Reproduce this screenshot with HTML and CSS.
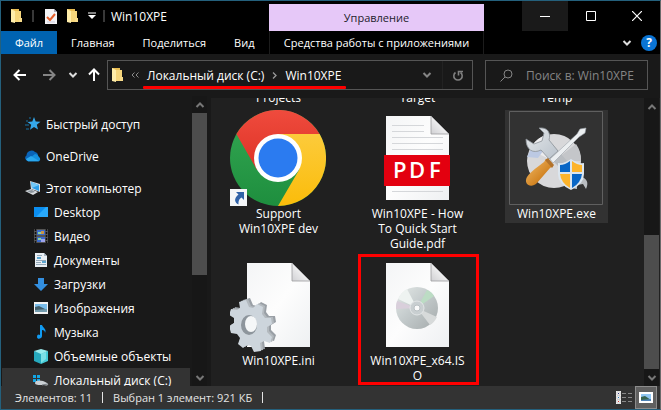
FILE: index.html
```html
<!DOCTYPE html>
<html lang="ru">
<head>
<meta charset="utf-8">
<title>Win10XPE</title>
<link rel="stylesheet" href="styles.css">
</head>
<body>
<svg width="0" height="0" class="defs" aria-hidden="true">
  <defs>
    <linearGradient id="paper" x1="0" y1="0" x2="1" y2="1"><stop offset="0" stop-color="#f4f5f6"/><stop offset=".5" stop-color="#fdfdfd"/><stop offset="1" stop-color="#eef0f2"/></linearGradient>
    <linearGradient id="fold" x1="0" y1="1" x2="1" y2="0"><stop offset="0" stop-color="#d0d0d3"/><stop offset=".5" stop-color="#eeeeef"/></linearGradient>
    <linearGradient id="steel" x1="0" y1="0" x2="1" y2="1"><stop offset="0" stop-color="#e6e9eb"/><stop offset="1" stop-color="#b9c2cb"/></linearGradient>
    <linearGradient id="wood" x1="0" y1="0" x2="1" y2="1"><stop offset="0" stop-color="#f3bd6c"/><stop offset=".6" stop-color="#d48726"/><stop offset="1" stop-color="#97550f"/></linearGradient>
    <linearGradient id="disc" x1="0" y1="0" x2="1" y2="1"><stop offset="0" stop-color="#e4e9e7"/><stop offset=".45" stop-color="#c5cccd"/><stop offset="1" stop-color="#a4aaab"/></linearGradient>
    <linearGradient id="red" x1="0" y1="0" x2="0" y2="1"><stop offset="0" stop-color="#ef4b3d"/><stop offset="1" stop-color="#de3226"/></linearGradient>
    <linearGradient id="yellow" x1="0" y1="0" x2="0" y2="1"><stop offset="0" stop-color="#fccb3b"/><stop offset="1" stop-color="#fbbc0a"/></linearGradient>
    <linearGradient id="green" x1="0" y1="0" x2="0" y2="1"><stop offset="0" stop-color="#34a853"/><stop offset="1" stop-color="#1e8e3e"/></linearGradient>
    <symbol id="folder" viewBox="0 0 11 14"><path d="M0 0h8v2h2v11H0z" fill="#e9bd52"/><path d="M4 2h6v11H4z" fill="#f6d67c"/><path d="M0 0l4 2v12l-4-1z" fill="#ffedaa"/><path d="M8 9h3v4H8z" fill="#f8dc8b"/></symbol>
    <symbol id="page" viewBox="0 0 63 84"><path d="M0 0h45l18 18v66H0z" fill="url(#paper)"/><path d="M45 0l18 18H45z" fill="url(#fold)" stroke="#9c9c9e" stroke-width=".8"/></symbol>
    <symbol id="chev" viewBox="0 0 10 8"><path d="M1.500 2L5 5.500 8.500 2" fill="none" stroke="currentColor" stroke-width="2"/></symbol>
  </defs>
</svg>
<div class="window">
  <header class="caption">
    <div class="title-tools">
      <svg class="mini" width="11" height="14"><use href="#folder"/></svg>
      <span class="rule"></span>
      <button class="bare check" aria-label="Свойства"><svg width="12" height="15" viewBox="0 0 12 15"><path d="M0 0h9l3 3v12H0z" fill="#f4f4f6"/><path d="M9 0v3h3z" fill="#aab"/><path d="M2 8l3 3 5-6" fill="none" stroke="#e5602c" stroke-width="2"/><path d="M2 13h8" stroke="#ccd"/></svg></button>
      <button class="bare new" aria-label="Новая папка"><svg width="11" height="14"><use href="#folder"/></svg></button>
      <button class="bare more" aria-label="Настройка панели"><svg width="8" height="8" viewBox="0 0 8 8"><path d="M0 1h8" stroke="#fff" stroke-width="1"/><path d="M0 3h8L4 7z" fill="#fff"/></svg></button>
      <span class="rule"></span>
      <h1>Win10XPE</h1>
    </div>
    <div class="manage">Управление</div>
    <div class="window-buttons">
      <button class="bare hot" aria-label="Свернуть"><svg width="10" height="10"><path d="M0 5.500h10" stroke="#fff"/></svg></button>
      <button class="bare" aria-label="Развернуть"><svg width="10" height="10"><path d="M.5.5h9v9h-9z" fill="none" stroke="#fff"/></svg></button>
      <button class="bare" aria-label="Закрыть"><svg width="10" height="10"><path d="M0 0l10 10M10 0L0 10" stroke="#fff" stroke-width="1.200"/></svg></button>
    </div>
  </header>
  <nav class="ribbon">
    <div class="tabs">
      <button class="bare file">Файл</button>
      <button class="bare">Главная</button>
      <button class="bare">Поделиться</button>
      <button class="bare">Вид</button>
    </div>
    <button class="bare tools">Средства работы с приложениями</button>
    <div class="help">
      <button class="bare" aria-label="Развернуть ленту"><svg class="light" width="10" height="8"><use href="#chev"/></svg></button>
      <button class="bare question" aria-label="Справка">?</button>
    </div>
  </nav>
  <div class="address-bar">
    <div class="arrows">
      <button class="bare" aria-label="Назад"><svg width="14" height="12" viewBox="0 0 14 12"><path d="M6.500 1L1.500 6l5 5M1.500 6H13" fill="none" stroke="#fff" stroke-width="2"/></svg></button>
      <button class="bare" aria-label="Вперёд"><svg width="14" height="12" viewBox="0 0 14 12"><path d="M7.500 1l5 5-5 5M12.500 6H1" fill="none" stroke="#858585" stroke-width="2"/></svg></button>
      <button class="bare recent" aria-label="Последние"><svg class="light" width="10" height="8"><use href="#chev"/></svg></button>
      <button class="bare up" aria-label="Вверх"><svg width="12" height="14" viewBox="0 0 12 14"><path d="M1 6.500l5-5 5 5M6 1.500V13" fill="none" stroke="#fff" stroke-width="2"/></svg></button>
    </div>
    <div class="address">
      <svg width="11" height="14"><use href="#folder"/></svg>
      <svg class="skip" width="8" height="6" viewBox="0 0 8 6"><path d="M3.500.5L1 3l2.500 2.500M7.500.5L5 3l2.500 2.500" fill="none" stroke="#8a8a8a"/></svg>
      <div class="crumbs">
        <a href="#c">Локальный диск (C:)</a>
        <svg width="5" height="7" viewBox="0 0 5 7"><path d="M1 .5l3 3-3 3" fill="none" stroke="#999" stroke-width="1.300"/></svg>
        <a href="#xpe">Win10XPE</a>
      </div>
      <button class="bare drop" aria-label="Предыдущие"><svg class="grey" width="10" height="8"><use href="#chev"/></svg></button>
      <button class="bare refresh" aria-label="Обновить"><svg width="12" height="13" viewBox="0 0 12 13"><path d="M3.500 3.500a4.200 4.200 0 1 0 5 0M6.500 6.500V2.500H11" fill="none" stroke="#808080" stroke-width="1.600"/></svg></button>
    </div>
    <label class="search">
      <svg width="13" height="13" viewBox="0 0 13 13"><circle cx="8" cy="5" r="4" fill="none" stroke="#858585"/><path d="M5 8l-4.500 4.500" stroke="#858585"/></svg>
      <input type="text" placeholder="Поиск в: Win10XPE" aria-label="Поиск">
    </label>
  </div>
  <main class="main">
    <aside class="sidebar">
      <ul class="tree">
        <li class="root"><svg width="16" height="16" viewBox="0 0 16 16"><path d="M9 1l1.700 4.500 4.800.3-3.700 3 1.200 4.700L9 11l-4 2.700 1.200-4.900L2.500 6l4.800-.4z" fill="#35a8ea"/><path d="M1 5h2M0 9h4M1 13h3M4 2h2" stroke="#1774aa"/></svg>Быстрый доступ</li>
        <li class="root"><svg width="16" height="16" viewBox="0 0 16 16"><path d="M3 13a3 3 0 0 1-1.500-5.500A5 5 0 0 1 10 4a4 4 0 0 1 3 4z" fill="#0a64b8"/><path d="M2 12L10 6a4.600 4.600 0 0 1 4 3 2.500 2.500 0 0 1-.5 4.500H3z" fill="#1590df"/><path d="M1 11l5-3 8 5H3a3 3 0 0 1-2-2z" fill="#2aa8ee"/></svg>OneDrive</li>
        <li class="root"><svg width="16" height="16" viewBox="0 0 16 16"><path d="M5 1l10 3v8L6 9z" fill="#d6dce2"/><path d="M6 2l8 3v6L7 8z" fill="#2d9ee8"/><path d="M6 2l8 3-7 3z" fill="#72c7f7"/><path d="M0 11l6-2 7 3-5 3z" fill="#d9dde0"/><path d="M2 11l5-1 3 2-4 1z" fill="#8b949c"/></svg>Этот компьютер</li>
        <li><svg width="16" height="16" viewBox="0 0 16 16"><path d="M1 3h14v10H1z" fill="#0b8ef0"/><path d="M3 13L13 3h2v10z" fill="#29a9fb"/></svg>Desktop</li>
        <li><svg width="16" height="16" viewBox="0 0 16 16"><path d="M1 1h14v14H1z" fill="#555"/><path d="M2.500 1v14M13.500 1v14" stroke="#111" stroke-width="1.500" stroke-dasharray="2 1"/><path d="M4 2h8v5H4zM4 9h8v5H4z" fill="#3a69c9"/><path d="M5 4h4v2H5zM5 10h3v2H5z" fill="#8cd19a"/><path d="M8 3h3v3H8z" fill="#c99547"/><path d="M8 11h4v3H8z" fill="#9da3ec"/></svg>Видео</li>
        <li><svg width="16" height="16" viewBox="0 0 16 16"><path d="M2 1h9l3 3v11H2z" fill="#e9eff4"/><path d="M11 1v3h3z" fill="#a6b5c2"/><path d="M4 3.500h5M3 8.500h10M3 10.500h5M3 12.500h10" stroke="#93a7b7"/><path d="M4 5h4v2H4zM9 9h4v2H9z" fill="#5ba5d0"/></svg>Документы</li>
        <li><svg width="16" height="16" viewBox="0 0 16 16"><path d="M5 2h6v6h4l-7 7-7-7h4z" fill="#338fe0"/></svg>Загрузки</li>
        <li><svg width="16" height="16" viewBox="0 0 16 16"><path d="M1 2h14v12H1z" fill="#f2f2f2"/><path d="M2 4h12v8H2z" fill="#79bcea"/><path d="M2 7l4-1 8 4v2H2z" fill="#425d69"/><path d="M2 10l12-1v3H2z" fill="#739cae"/></svg>Изображения</li>
        <li><svg width="16" height="16" viewBox="0 0 16 16"><path d="M7 1h2c1 3 5 4 3 8 0-2-1-3-3-3v6c0 3-5 4-5 1s2-3 3-2z" fill="#109bf2"/></svg>Музыка</li>
        <li><svg width="16" height="16" viewBox="0 0 16 16"><path d="M1 3l7 2v11l-7-3z" fill="#26a9bd"/><path d="M15 3L8 5v11l7-3z" fill="#44cad7"/><path d="M1 3l7-2 7 2-7 3z" fill="#9aebed"/><path d="M8 6l5-2v7l-5 4z" fill="#7bdfe5"/></svg>Объемные объекты</li>
        <li class="current"><svg width="16" height="16" viewBox="0 0 16 16"><path d="M0 3h3v3H0zM4 3h3v3H4zM0 7h3v3H0zM4 7h3v3H4z" fill="#13a7e6"/><path d="M2 11c0-3 5-3 8-2s6 3 5 4-5 0-7 0-6 0-6-2z" fill="#cbd0d4"/><path d="M9 13l6-1" stroke="#747a80"/></svg>Локальный диск (C:)</li>
      </ul>
      <div class="scroll side-scroll"><button class="bare flip" aria-label="Вверх"><svg width="10" height="8"><use href="#chev"/></svg></button><div class="thumb"></div><button class="bare" aria-label="Вниз"><svg width="10" height="8"><use href="#chev"/></svg></button></div>
    </aside>
    <section class="content">
      <div class="files">
        <div class="tail">Projects</div><div class="tail">Target</div><div class="tail">Temp</div>
        <div class="item">
          <svg width="96" height="96" viewBox="0 0 96 96"><circle cx="48" cy="48" r="48" fill="url(#green)"/><path d="M6.400 24A48 48 0 0 1 89.600 24H48v24L27 60z" fill="url(#red)"/><path d="M89.600 24A48 48 0 0 1 48 96L69 60 48 24z" fill="url(#yellow)"/><circle cx="48" cy="48" r="24" fill="#fff"/><circle cx="48" cy="48" r="19.500" fill="#2b7bf0"/><path d="M0 79h17v17H0z" fill="#f4f6f8"/><path d="M6 82h8v8l-2.500-2.500c-3 2-3 4-3 7-4-2-5-6 0-10z" fill="#3062a8"/></svg>
          <span>Support Win10XPE dev</span>
        </div>
        <div class="item">
          <svg width="96" height="96" viewBox="0 0 96 96"><use href="#page" x="17" y="6" width="63" height="84"/><path d="M23 15.500h32M23 21.500h32M23 27.500h51M23 33.500h51M23 39.500h51M23 81.500h51" stroke="#d5d7da"/><path d="M15 45h66v31H15z" fill="#e3000f"/><text class="pdf" x="24" y="68">P</text><text class="pdf" x="40" y="68">D</text><text class="pdf" x="60" y="68">F</text></svg>
          <span>Win10XPE - How To Quick Start Guide.pdf</span>
        </div>
        <div class="item selected">
          <svg width="96" height="96" viewBox="0 0 96 96"><path d="M1.500 1.500h93v93h-93z" fill="none" stroke="#606060"/><circle cx="46" cy="51" r="27" fill="#d8d8da"/><path d="M46 51L22 40a27 27 0 0 1 13-14z" fill="#ececee"/><path d="M19 47l4-8 15-2-8 11z" fill="#bcc9e3"/><path d="M46 51l22-17a27 27 0 0 1 5 17z" fill="#c4c6c9"/><path d="M46 36l27 31c6 1 8 6 5 12l-3-5-6 1v4c-6 0-7-6-5-9L38 44z" fill="#b9bdc1"/><path d="M31 18c9-1 12 5 10 12l9 11-9 8-8-9c-8 4-15 0-15-11l8 5 8-3 2-8z" fill="url(#steel)" stroke="#8c9298" stroke-width=".8"/><path d="M42 49L69 24l3-5 6-1-1 5-6 4-26 26z" fill="#eceff1" stroke="#9ca3a9" stroke-width=".6"/><path d="M38 49l7 7-3 2-13 15c-6 6-14 1-10-6 4-6 12-11 17-15z" fill="url(#wood)"/><path d="M40 48l6 7-2 3-7-8z" fill="#b2722a"/><path d="M63 49q7 5 13 4v11q0 10-13 16Q50 74 50 64V53q6 1 13-4z" fill="#dce6ef"/><path d="M62 51q-5 4-10 4v7h10z" fill="#0866c6"/><path d="M64 51q5 4 10 4v7H64z" fill="#fdb42b"/><path d="M52 64h10v14q-9-5-10-14z" fill="#fdb42b"/><path d="M64 64h10q-1 9-10 14z" fill="#0866c6"/></svg>
          <span>Win10XPE.exe</span>
        </div>
        <div class="item">
          <svg width="96" height="96" viewBox="0 0 96 96"><defs><path id="cog" d="M10 45L17 43 20 50 24 51 28 47 34 50 33 57 36 61 42 61 43 67 38 70 38 75 43 80 41 86 35 84 31 86 32 94 25 95 22 89 18 88 14 91 9 87 11 81 8 77 2 76 0 69 5 66 5 61 0 58 2 52 8 53 11 51z"/></defs><use href="#page" x="17" y="6" width="63" height="84"/><use href="#cog" x="3" y="-2" fill="#999fa5"/><use href="#cog" x="1" y="-1" fill="#b3b9be"/><use href="#cog" x="-1" fill="#cdd5dc"/><ellipse cx="19" cy="68" rx="8" ry="10" fill="#8d959c"/><ellipse cx="21" cy="67" rx="6" ry="8" fill="#f5f7f8"/></svg>
          <span>Win10XPE.ini</span>
        </div>
        <div class="item marked">
          <svg width="96" height="96" viewBox="0 0 96 96"><use href="#page" x="17" y="6" width="63" height="84"/><circle cx="48" cy="51" r="21" fill="url(#disc)"/><path d="M48 51L29 42q3-7 9-10z" fill="#eef3f1"/><path d="M48 51l-21 1q0-5 1-8z" fill="#d9cfdb"/><path d="M48 51l10-18q5 2 7 6z" fill="#bcdcc4"/><path d="M48 51l20 9q-3 6-7 8z" fill="#d7dada"/><circle cx="48" cy="51" r="7" fill="#c9cfd1" stroke="#e3e6e7"/><circle cx="48" cy="51" r="3" fill="#fafafa" stroke="#b9c0c3"/></svg>
          <span>Win10XPE_x64.ISO</span>
        </div>
      </div>
      <div class="scroll file-scroll"><button class="bare flip" aria-label="Вверх"><svg width="10" height="8"><use href="#chev"/></svg></button><div class="thumb"></div><button class="bare" aria-label="Вниз"><svg width="10" height="8"><use href="#chev"/></svg></button></div>
    </section>
  </main>
  <footer class="status">
    <span>Элементов: 11</span><i></i><span>Выбран 1 элемент: 921 КБ</span><i></i>
    <div class="views">
      <button class="bare" aria-label="Таблица"><svg width="16" height="13" viewBox="0 0 16 13"><path d="M0 0h5v13H0z" fill="#eee"/><path d="M1 1h3v3H1zM1 5h3v3H1zM1 9h3v3H1z" fill="#fff" stroke="#aaa" stroke-width=".5"/><path d="M2 2h1v1H2z" fill="#338"/><path d="M2 6h1v1H2z" fill="#27b"/><path d="M2 10h1v1H2z" fill="#c33"/><path d="M6 2.500h4M12 2.500h4M6 6.500h4M12 6.500h4M6 10.500h4M12 10.500h4" stroke="#888"/></svg></button>
      <button class="bare on" aria-label="Крупные значки"><svg width="14" height="11" viewBox="0 0 14 11"><path d="M0 0h14v11H0z" fill="#fff"/><path d="M2 2h10v7H2z" fill="#8fc5f1"/><path d="M2 5l4-1 6 4v1H2z" fill="#36634e"/><path d="M2 8l10-1v2H2z" fill="#4d82b6"/></svg></button>
    </div>
  </footer>
</div>
</body>
</html>
```
FILE: styles.css
```css
* { box-sizing: border-box; }
body { margin: 0; background: #191919; color: #fff; font: 12px/15px "Open Sans", "Noto Sans", sans-serif; }
svg { display: block; flex: none; }
.defs { position: absolute; }
.bare { margin: 0; padding: 0; border: 0; background: none; color: inherit; font: inherit; display: flex; align-items: center; justify-content: center; }
.window { height: 100vh; display: flex; flex-direction: column; border: 1px solid #24607c; border-right-color: #6b6b6b; overflow: hidden; }

.caption, .ribbon { display: grid; grid-template-columns: 268px 215px 1fr; background: #000; flex: none; font-size: 11px; }
.caption { height: 30px; }
.title-tools { display: flex; align-items: center; padding-left: 10px; }
.rule { width: 2px; height: 12px; background: #383838; margin-left: 10px; }
.check { margin-left: 11px; }
.new { margin-left: 10px; }
.more { margin-left: 10px; }
.more + .rule { margin-left: 7px; }
h1 { margin: 0 0 0 6px; font-size: 12px; font-weight: 400; }
.manage { margin-top: 3px; background: #e6c8f8; color: #1d1d2b; display: flex; align-items: center; justify-content: center; }
.window-buttons { display: flex; justify-content: flex-end; }
.window-buttons button { width: 46px; }
.window-buttons .hot { background: #1a1a1a; }

.ribbon { height: 23px; }
.tabs { display: flex; }
.tabs button { padding: 0 14px; }
.tabs .file { width: 56px; background: #0063b1; }
.tools { border: solid #1c1c1c; border-width: 0 1px; white-space: nowrap; }
.help { display: flex; justify-content: flex-end; align-items: center; gap: 9px; padding-right: 3px; }
.question { width: 16px; height: 16px; border-radius: 8px; background: #0a74d4; font-weight: 700; font-size: 12px; }
.light { color: #ddd; }
.grey { color: #858585; }

.address-bar { height: 42px; flex: none; display: flex; align-items: center; padding-right: 12px; background: #191919; }
.arrows { display: flex; align-items: center; width: 106px; padding-left: 12px; gap: 15px; flex: none; }
.arrows .recent { margin-left: -3px; }
.arrows .up { margin-left: -5px; }
.address { flex: 1; height: 30px; display: flex; align-items: center; border: 1px solid #555; padding-left: 4px; }
.skip { margin: 0 8px; }
.crumbs { position: relative; display: flex; align-items: center; gap: 8px; white-space: nowrap; }
.crumbs::after { content: ""; position: absolute; left: -4px; right: -5px; top: 18px; height: 3px; border-radius: 1px; background: #f00; }
.crumbs a { color: #fff; text-decoration: none; }
.drop { margin-left: auto; padding: 0 10px; }
.refresh { width: 30px; height: 28px; border-left: 1px solid #222; }
.search { width: 163px; margin-left: 12px; height: 30px; display: flex; align-items: center; gap: 13px; border: 1px solid #555; padding-left: 14px; }
.search input { flex: 1; min-width: 0; border: 0; padding: 0; background: none; outline: 0; color: #fff; font: inherit; }
.search input::placeholder { color: #858585; opacity: 1; }

.main { flex: 1; min-height: 0; display: flex; }
.sidebar { width: 207px; flex: none; display: flex; overflow: hidden; }
.tree { list-style: none; margin: 0; padding: 16px 0 0; flex: 1; height: 0; min-height: 100%; white-space: nowrap; }
.tree li { height: 24px; padding-left: 32px; display: flex; align-items: center; gap: 5px; }
.tree .root { padding-left: 24px; }
.tree .root + .root { margin-top: 8px; }
.tree .current { background: #333; margin: 0 2px 0 1px; padding-left: 31px; }
.scroll { width: 15px; flex: none; display: flex; flex-direction: column; color: #777; background: #171717; }
.scroll button { height: 17px; flex: none; }
.scroll .flip svg { transform: scaleY(-1); }
.thumb { background: #4d4d4d; }
.side-scroll { margin-right: 1px; }
.side-scroll .thumb { flex: 0 0 56%; margin-bottom: auto; }
.content { flex: 1; min-width: 0; margin: 2px 0 0 3px; display: flex; background: #202020; }
.files { flex: 1; min-width: 0; overflow: hidden; padding-left: 16px; display: grid; grid-template-columns: repeat(3, 103px); grid-template-rows: 12px 147px 132px; column-gap: 36px; align-items: start; }
.tail { margin-top: -8px; text-align: center; }
.item { position: relative; display: flex; flex-direction: column; align-items: center; padding-bottom: 2px; }
.item > svg { margin-right: 1px; }
.item > span { width: 95px; text-align: center; overflow-wrap: anywhere; }
.selected { background: #323232; }
.marked::after { content: ""; position: absolute; inset: -3px -10px 0 -8px; border: 3px solid #f00; }
.pdf { font: 600 22px "Open Sans", sans-serif; fill: #fff; }
.file-scroll { margin-right: 1px; }
.file-scroll .thumb { flex: 0 0 134px; margin-top: auto; }

.status { height: 23px; flex: none; display: flex; align-items: center; padding: 0 3px 0 14px; background: #333; color: #e4e4e4; font-size: 11px; }
.status i { width: 1px; height: 11px; background: #e4e4e4; margin: 0 10px; }
.views { margin-left: auto; display: flex; align-items: center; gap: 3px; }
.views .on { width: 22px; height: 23px; background: #606060; border: 1px solid #8c8c8c; }
```
